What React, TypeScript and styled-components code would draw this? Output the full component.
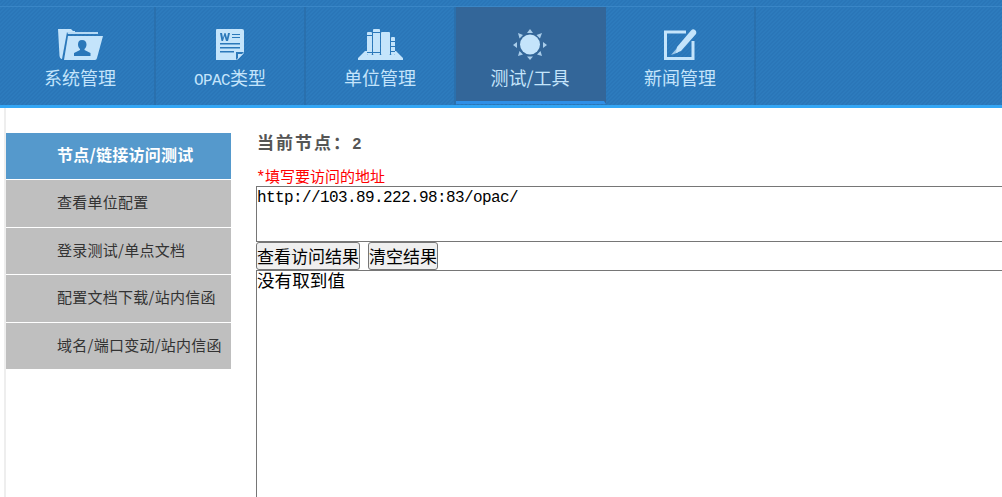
import React from "react";
import styled, { createGlobalStyle } from "styled-components";

const Global = createGlobalStyle`
  html, body { margin: 0; padding: 0; background: #fff; overflow: hidden; }
  body { font-family: "Liberation Mono", "Noto Sans CJK SC", monospace; }
`;

const Page = styled.div`
  width: 1002px;
  height: 497px;
  overflow: hidden;
  display: flex;
  flex-direction: column;
`;

const Header = styled.header`
  height: 108px;
  flex: none;
  box-sizing: border-box;
  border-bottom: 3px solid #33a6f5;
  background-color: #2b78ba;
  background-image: repeating-linear-gradient(135deg, #2d7bbd 0 1.414px, #2a76b8 1.414px 2.828px);
  padding-top: 6px;
`;

const Nav = styled.nav`
  display: flex;
  height: 99px;
  box-sizing: border-box;
  border-top: 1px solid #3a86c6;
`;

const NavItem = styled.div<{ $w: number; $pad?: number; $active?: boolean }>`
  width: ${(p) => p.$w}px;
  flex: none;
  box-sizing: border-box;
  border-right: 2px solid ${(p) => (p.$active ? "#336699" : "#2a70ad")};
  background: ${(p) => (p.$active ? "#336699" : "transparent")};
  border-bottom: ${(p) => (p.$active ? "3px solid #2f8fe6" : "0")};
  height: ${(p) => (p.$active ? "97px" : "98px")};
  display: flex;
  flex-direction: column;
  align-items: center;
  padding-top: 20px;
  padding-left: ${(p) => p.$pad ?? 0}px;
  color: #c4e4fb;
`;

const IconBox = styled.div`
  height: 34px;
  display: flex;
  align-items: center;
  justify-content: center;
`;

const NavLabel = styled.div`
  margin-top: 5px;
  font-size: 18px;
  line-height: 22px;
  white-space: nowrap;
  font-family: "Noto Sans CJK SC", monospace;
`;

const Latin = styled.span`
  font-family: "Liberation Mono", monospace;
  font-size: 16px;
  letter-spacing: -0.6px;
`;

const Body = styled.div`
  flex: 1;
  display: flex;
  min-height: 0;
`;

const Sidebar = styled.aside`
  width: 227px;
  flex: none;
  box-sizing: border-box;
  margin-left: 4px;
  border-left: 2px solid #eeeeee;
  padding-top: 25px;
  margin-right: 25px;
  display: flex;
  flex-direction: column;
  gap: 1px;
`;

const SideItem = styled.div<{ $active?: boolean; $h: number }>`
  height: ${(p) => p.$h}px;
  box-sizing: border-box;
  padding-left: 51px;
  padding-bottom: 4px;
  display: flex;
  align-items: center;
  font-size: ${(p) => (p.$active ? 16 : 15)}px;
  white-space: nowrap;
  font-family: "Noto Sans CJK SC", monospace;
  font-weight: ${(p) => (p.$active ? 700 : 400)};
  letter-spacing: 0.25px;
  background: ${(p) => (p.$active ? "#5599cc" : "#bfbfbf")};
  color: ${(p) => (p.$active ? "#ffffff" : "#333333")};
`;

const Main = styled.main`
  flex: 1;
  min-width: 0;
  padding-top: 23px;
  display: flex;
  flex-direction: column;
`;

const Current = styled.div`
  margin-left: 1px;
  height: 22px;
  flex: none;
  font-size: 17px;
  line-height: 22px;
  font-weight: 700;
  color: #555555;
  font-family: "Noto Sans CJK SC", monospace;
  letter-spacing: 2px;
  white-space: nowrap;
`;

const Hint = styled.div`
  margin-top: 14px;
  height: 19px;
  flex: none;
  line-height: 17px;
  font-size: 15px;
  color: #ff0000;
  white-space: nowrap;
  font-family: "Noto Sans CJK SC", monospace;
`;

const Field = styled.div<{ $h: number; $top?: number }>`
  width: 760px;
  height: ${(p) => p.$h}px;
  box-sizing: border-box;
  border: 1px solid #767676;
  padding-top: ${(p) => p.$top ?? 0}px;
  font-size: 16px;
  letter-spacing: -0.6px;
  line-height: 20px;
  color: #000;
  white-space: pre;
  flex: none;
`;

const ResultText = styled.span`
  display: block;
  margin-top: -1px;
  font-family: "Noto Sans CJK SC", monospace;
  font-size: 17.6px;
  letter-spacing: 0;
  line-height: 20px;
`;

const Actions = styled.div`
  display: flex;
  gap: 8px;
  height: 28px;
  align-items: flex-start;
  flex: none;
`;

const Btn = styled.button`
  height: 28px;
  padding: 0;
  box-sizing: border-box;
  border: 1px solid #767676;
  border-radius: 3px;
  background: #efefef;
  color: #000;
  font-family: "Noto Sans CJK SC", sans-serif;
  font-size: 17px;
  line-height: 24px;
  white-space: nowrap;
`;

const FolderIcon = () => (
  <svg width="45" height="31" viewBox="0 0 45 31" fill="#c4e4fb">
    <path d="M0 0h13l2 2h2v1H9L4 30h-.5Q2 30 1.500 27z" />
    <path d="M9 3h31v2H10z" opacity=".9" />
    <path d="M10 7h35l-6 22q-.4 2-2 2H6z" />
    <path d="M24 11c3 0 4.500 2 4.500 4.500 0 2-1 3.500-2 4.500v1l6 3v3H16v-3l6-3v-1c-1-1-2-2.500-2-4.500C20 13 21 11 24 11z" fill="#2b78ba" />
  </svg>
);

const DocIcon = () => (
  <svg width="28" height="31" viewBox="0 0 28 31" fill="#c4e4fb">
    <path d="M1 0h25q2 0 2 2v22l-7 7H0V1q0-1 1-1z" />
    <g fill="#2b78ba">
      <path d="M4 4h2l1 5 1.500-5h1l1.500 5 1-5h2l-2 8h-2l-1.500-5-1.500 5h-1.500z" />
      <rect x="16" y="5" width="8" height="1" />
      <rect x="16" y="8" width="8" height="1" />
      <rect x="4" y="14" width="20" height="1.500" />
      <rect x="4" y="18" width="20" height="1.500" />
      <rect x="4" y="22" width="14" height="1.500" />
      <path d="M20 31v-8h8z" />
    </g>
    <path d="M22 30v-5h5z" />
  </svg>
);

const BooksIcon = () => (
  <svg width="45" height="31" viewBox="0 0 45 31" fill="#c4e4fb">
    <path d="M7 22h2v4h28v-4h1l7 7v2H0v-2z" />
    <rect x="9" y="3" width="5" height="23" rx="1" />
    <rect x="15" y="0" width="7" height="26" rx="1" />
    <rect x="23" y="3" width="9" height="23" rx="1" />
    <rect x="33" y="8" width="4" height="18" rx="1" />
    <g fill="#2b78ba">
      <rect x="9" y="6" width="5" height="1" />
      <rect x="15" y="3" width="7" height="1" />
      <rect x="9" y="23" width="5" height="1" />
      <rect x="15" y="23" width="7" height="1" />
      <rect x="33" y="12" width="4" height="1" />
      <rect x="33" y="17" width="4" height="1" />
      <rect x="33" y="22" width="4" height="1" />
    </g>
  </svg>
);

const SunIcon = () => (
  <svg width="34" height="31" viewBox="0 0 34 31" fill="#c4e4fb">
    <circle cx="17" cy="15.500" r="10" />
    <g fill="#a9cdea">
      <path d="M17 0l3 4h-6zM17 31l-3-3.500h6zM0 16l4-3v6zM34 16l-4 3v-6z" />
      <path d="M5 4l5 2-3.500 3.500zM29 4l-2 5.500L23.500 6zM5 27l1.500-5 3.500 3.500zM29 27l-5-1.500 3.500-3.500z" />
    </g>
  </svg>
);

const EditIcon = () => (
  <svg width="33" height="31" viewBox="0 0 33 31">
    <path d="M22 3H1.500v26.500H29V12" fill="none" stroke="#c4e4fb" strokeWidth="3" />
    <path d="M27 1.500q2-2 4-.5t1 4L17 22l-5 2 1-6z" fill="#c4e4fb" />
    <path d="M13 19l-6 7 7-2.500z" fill="#c4e4fb" opacity=".75" />
  </svg>
);

const items = [
  { w: 156, pad: 6, label: <>系统管理</>, icon: <FolderIcon /> },
  { w: 150, label: <><Latin>OPAC</Latin>类型</>, icon: <DocIcon /> },
  { w: 150, label: <>单位管理</>, icon: <BooksIcon /> },
  { w: 150, label: <>测试/工具</>, icon: <SunIcon />, active: true },
  { w: 150, label: <>新闻管理</>, icon: <EditIcon /> },
];

const side = [
  { t: "节点/链接访问测试", h: 46, active: true },
  { t: "查看单位配置", h: 47 },
  { t: "登录测试/单点文档", h: 46 },
  { t: "配置文档下载/站内信函", h: 47 },
  { t: "域名/端口变动/站内信函", h: 46 },
];

export default function App() {
  return (
    <Page>
      <Global />
      <Header>
        <Nav>
          {items.map((it, i) => (
            <NavItem key={i} $w={it.w} $pad={it.pad} $active={it.active}>
              <IconBox>{it.icon}</IconBox>
              <NavLabel>{it.label}</NavLabel>
            </NavItem>
          ))}
        </Nav>
      </Header>
      <Body>
        <Sidebar>
          {side.map((s) => (
            <SideItem key={s.t} $h={s.h} $active={s.active}>{s.t}</SideItem>
          ))}
        </Sidebar>
        <Main>
          <Current>当前节点：<Latin>2</Latin></Current>
          <Hint><Latin>*</Latin>填写要访问的地址</Hint>
          <Field $h={56} $top={1}>http://103.89.222.98:83/opac/</Field>
          <Actions>
            <Btn>查看访问结果</Btn>
            <Btn>清空结果</Btn>
          </Actions>
          <Field $h={240}><ResultText>没有取到值</ResultText></Field>
        </Main>
      </Body>
    </Page>
  );
}
